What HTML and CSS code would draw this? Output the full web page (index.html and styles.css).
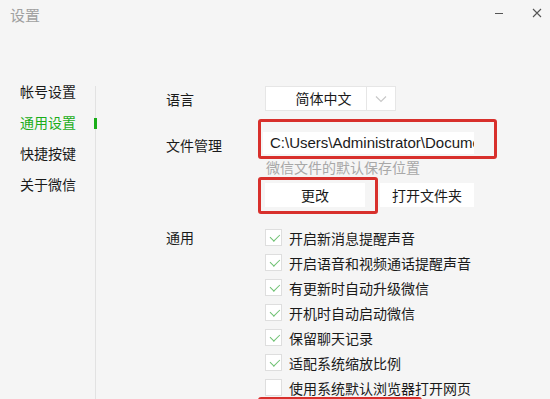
FILE: index.html
```html
<!DOCTYPE html>
<html lang="zh-CN">
<head>
  <meta charset="UTF-8" />
  <meta name="viewport" content="width=device-width, initial-scale=1.0"/>
  <title>设置</title>
  <link rel="stylesheet" href="styles.css">
</head>
<body>
  <div class="window">

    <header class="titlebar">
      <span class="title">设置</span>
      <div class="controls">
        <span class="ctl">
          <svg width="10" height="10" viewBox="0 0 10 10"><path d="M1 5.5h8" stroke="#555" stroke-width="1"/></svg>
        </span>
        <span class="ctl">
          <svg width="10" height="10" viewBox="0 0 10 10"><path d="M1 1l8 8M9 1l-8 8" stroke="#555" stroke-width="1.1"/></svg>
        </span>
      </div>
    </header>

    <div class="main">
      <nav class="sidebar">
        <ul class="menu">
          <li>帐号设置</li>
          <li class="active">通用设置</li>
          <li>快捷按键</li>
          <li>关于微信</li>
        </ul>
      </nav>

      <section class="content">
        <div class="row row-lang">
          <span class="label">语言</span>
          <div class="select">
            <span class="select-value">简体中文</span>
            <span class="select-arrow">
              <svg width="12" height="8" viewBox="0 0 12 8"><path d="M1 1.5l5 5 5-5" fill="none" stroke="#c8c8c8" stroke-width="1.2"/></svg>
            </span>
          </div>
        </div>

        <div class="row row-file">
          <span class="label">文件管理</span>
          <div class="path-input">C:\Users\Administrator\Documents\WeChat Files</div>
        </div>
        <div class="hint">微信文件的默认保存位置</div>
        <div class="buttons">
          <button class="btn btn-change">更改</button>
          <button class="btn btn-open">打开文件夹</button>
        </div>

        <div class="row row-general">
          <span class="label">通用</span>
          <ul class="checks">
            <li><span class="box checked"></span>开启新消息提醒声音</li>
            <li><span class="box checked"></span>开启语音和视频通话提醒声音</li>
            <li><span class="box checked"></span>有更新时自动升级微信</li>
            <li><span class="box checked"></span>开机时自动启动微信</li>
            <li><span class="box checked"></span>保留聊天记录</li>
            <li><span class="box checked"></span>适配系统缩放比例</li>
            <li><span class="box"></span>使用系统默认浏览器打开网页</li>
          </ul>
        </div>
      </section>
    </div>

    <!-- red annotation frames drawn over the window -->
    <div class="mark mark-path"></div>
    <div class="mark mark-change"></div>
    <div class="mark mark-browser"></div>
  </div>
</body>
</html>
```

FILE: styles.css
```css
body {
  margin: 0;
  padding: 0;
  background-color: #f5f5f5;
  font-family: "Noto Sans", "Noto Sans CJK SC", sans-serif;
  color: #1a1a1a;
  overflow: hidden;
}

.window {
  position: relative;
  height: 100vh;
  display: flex;
  flex-direction: column;
  overflow: hidden;
}

.titlebar {
  height: 32px;
  display: flex;
  align-items: center;
  justify-content: space-between;
  padding: 0 3px 0 10px;
  flex-shrink: 0;
}

.title {
  font-size: 15px;
  color: #a0a0a0;
  line-height: 1;
  margin-top: -1px;
}

.controls {
  display: flex;
  align-items: center;
  gap: 18px;
  margin-top: -6px;
}

.ctl {
  width: 20px;
  height: 20px;
  display: flex;
  align-items: center;
  justify-content: center;
}

.main {
  flex: 1;
  display: flex;
  margin-top: 54px;
}

.sidebar {
  width: 96px;
  flex-shrink: 0;
  box-sizing: border-box;
  border-right: 1px solid #e2e2e2;
}

.menu {
  list-style: none;
  margin: -10px 0 0;
  padding: 0;
}

.menu li {
  position: relative;
  font-size: 14px;
  line-height: 31px;
  padding-left: 20px;
}

.menu li.active {
  color: #1aad19;
}

.menu li.active::after {
  content: "";
  position: absolute;
  right: -2px;
  top: 11px;
  width: 3px;
  height: 11px;
  background: #1aad19;
}

.content {
  flex: 1;
  padding-left: 70px;
  font-size: 14px;
}

.row {
  display: flex;
}

.label {
  width: 99px;
  flex-shrink: 0;
}

.row-lang {
  height: 25px;
  align-items: center;
}

.select {
  display: flex;
  width: 131px;
  height: 25px;
  box-sizing: border-box;
  border: 1px solid #e6e6e6;
  background: #fff;
}

.select-value {
  width: 101px;
  box-sizing: border-box;
  border-right: 1px solid #e6e6e6;
  padding-left: 15px;
  text-align: center;
  line-height: 23px;
}

.select-arrow {
  flex: 1;
  display: flex;
  align-items: center;
  justify-content: center;
}

.row-file {
  margin-top: 21px;
  height: 22px;
  align-items: center;
}

.row-file .label {
  margin-top: 4px;
}

.path-input {
  flex: 0 0 211px;
  width: 211px;
  height: 22px;
  margin-left: -2px;
  box-sizing: border-box;
  background: #fff;
  padding-left: 7px;
  font-family: "Liberation Sans", "Noto Sans CJK SC", sans-serif;
  font-size: 15px;
  line-height: 22px;
  white-space: nowrap;
  overflow: hidden;
}

.hint {
  margin-top: 7px;
  padding-left: 100px;
  color: #a8a8a8;
  line-height: 14px;
}

.buttons {
  display: flex;
  gap: 15px;
  margin-top: 8px;
  padding-left: 99px;
}

.btn {
  height: 24px;
  border: none;
  background: #fff;
  font-family: inherit;
  font-size: 14px;
  color: #1a1a1a;
  padding: 0;
}

.btn-change {
  width: 100px;
}

.btn-open {
  width: 94px;
}

.row-general {
  margin-top: 18px;
}

.row-general .label {
  line-height: 25px;
}

.checks {
  list-style: none;
  margin: 0;
  padding: 0;
}

.checks li {
  display: flex;
  align-items: center;
  height: 25px;
}

.box {
  width: 17px;
  height: 17px;
  box-sizing: border-box;
  border: 1px solid #dedede;
  background: #fff;
  margin-right: 7px;
  position: relative;
}

.box.checked::after {
  content: "";
  position: absolute;
  left: 3px;
  top: 2px;
  width: 8px;
  height: 5px;
  border-left: 1px solid #6cc070;
  border-bottom: 1px solid #6cc070;
  transform: rotate(-45deg) translate(0, 2px);
}

.mark {
  position: absolute;
  box-sizing: border-box;
  border: 3px solid #d8302c;
  border-radius: 3px;
}

.mark-path {
  left: 258px;
  top: 119px;
  width: 239px;
  height: 40px;
}

.mark-change {
  left: 258px;
  top: 177px;
  width: 120px;
  height: 37px;
}

.mark-browser {
  left: 258px;
  top: 397px;
  width: 164px;
  height: 30px;
}
```
